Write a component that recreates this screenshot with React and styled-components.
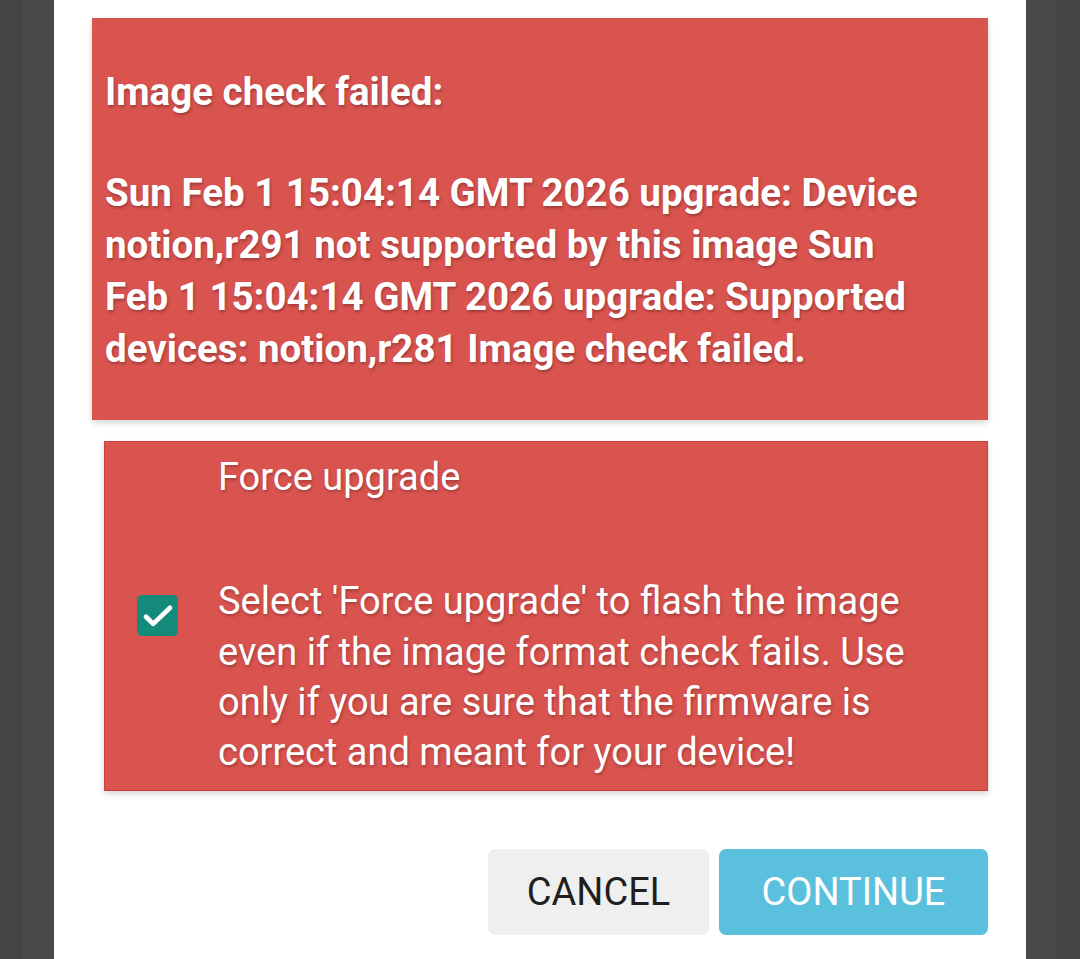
import React from 'react'
import styled, { createGlobalStyle } from 'styled-components'

const GlobalStyle = createGlobalStyle`
    html, body {
        margin: 0;
        padding: 0;
        background: #444444;
    }
    body {
        font-family: Roboto, "Liberation Sans", sans-serif;
    }
`;

const Page = styled.div`
    display: flex;
    min-height: 959px;
    background: #444444;
`;

const Backdrop = styled.div`
    width: ${props => props.width}px;
    background: ${props => props.tone};
    flex-shrink: 0;
`;

const Dialog = styled.div`
    flex: 1;
    background: #ffffff;
    padding: 18px 38px 0;
    display: flex;
    flex-direction: column;
`;

const Alert = styled.div`
    background: #d9534f;
    color: #ffffff;
    padding: 48px 60px 45px 13px;
    box-shadow: 0 3px 6px rgba(0, 0, 0, 0.16);
    text-shadow: 1px 2px 3px rgba(0, 0, 0, 0.28);
    font-weight: 700;
    font-size: 38.5px;
    line-height: 52px;
`;

const AlertTitle = styled.div`
    margin-bottom: 49px;
`;

const AlertBody = styled.div``;

const ForceBox = styled.div`
    margin: 21px 0 0 12px;
    background: #d9534f;
    border: 1px solid #c9403b;
    box-shadow: 0 3px 6px rgba(0, 0, 0, 0.16);
    color: #ffffff;
    text-shadow: 1px 2px 3px rgba(0, 0, 0, 0.25);
    font-size: 38px;
    line-height: 50.3px;
    padding: 10px 20px 13px 0;
`;

const ForceTitle = styled.div`
    padding-left: 113px;
    margin-bottom: 74px;
`;

const ForceRow = styled.div`
    display: flex;
    align-items: flex-start;
`;

const CheckCell = styled.div`
    width: 113px;
    flex-shrink: 0;
    padding: 19px 0 0 32px;
    box-sizing: border-box;
`;

const CheckBox = styled.div`
    width: 41px;
    height: 41px;
    border-radius: 5px;
    background: #138a7a;
    display: flex;
    align-items: center;
    justify-content: center;
`;

const ForceText = styled.div`
    flex: 1;
`;

const Actions = styled.div`
    display: flex;
    justify-content: flex-end;
    gap: 10px;
    margin-top: 58px;
`;

const Button = styled.button`
    height: 86px;
    width: ${props => props.width}px;
    border: none;
    border-radius: 7px;
    font-family: Roboto, "Liberation Sans", sans-serif;
    font-size: 38px;
    text-transform: uppercase;
    background: ${props => props.primary ? '#5bc0de' : '#efefef'};
    color: ${props => props.primary ? '#ffffff' : '#1f1f1f'};
    padding: 0;
`;

const App = () => (
    <Page>
        <GlobalStyle />
        <Backdrop width={22} tone="#444444" />
        <Backdrop width={32} tone="#4a4a4a" />
        <Dialog>
            <Alert>
                <AlertTitle>Image check failed:</AlertTitle>
                <AlertBody>
                    Sun Feb 1 15:04:14 GMT 2026 upgrade: Device notion,r291 not supported by this image Sun Feb 1 15:04:14 GMT 2026 upgrade: Supported devices: notion,r281 Image check failed.
                </AlertBody>
            </Alert>
            <ForceBox>
                <ForceTitle>Force upgrade</ForceTitle>
                <ForceRow>
                    <CheckCell>
                        <CheckBox>
                            <svg width="36" height="36" viewBox="0 0 24 24" fill="none">
                                <path d="M4 12.5l4.8 4.8L20 6.5" stroke="#ffffff" strokeWidth="3.1" strokeLinecap="round" strokeLinejoin="round" />
                            </svg>
                        </CheckBox>
                    </CheckCell>
                    <ForceText>
                        Select 'Force upgrade' to flash the image even if the image format check fails. Use only if you are sure that the firmware is correct and meant for your device!
                    </ForceText>
                </ForceRow>
            </ForceBox>
            <Actions>
                <Button width={221}>Cancel</Button>
                <Button width={269} primary>Continue</Button>
            </Actions>
        </Dialog>
        <Backdrop width={30} tone="#4a4a4a" />
        <Backdrop width={24} tone="#444444" />
    </Page>
)

export default App
